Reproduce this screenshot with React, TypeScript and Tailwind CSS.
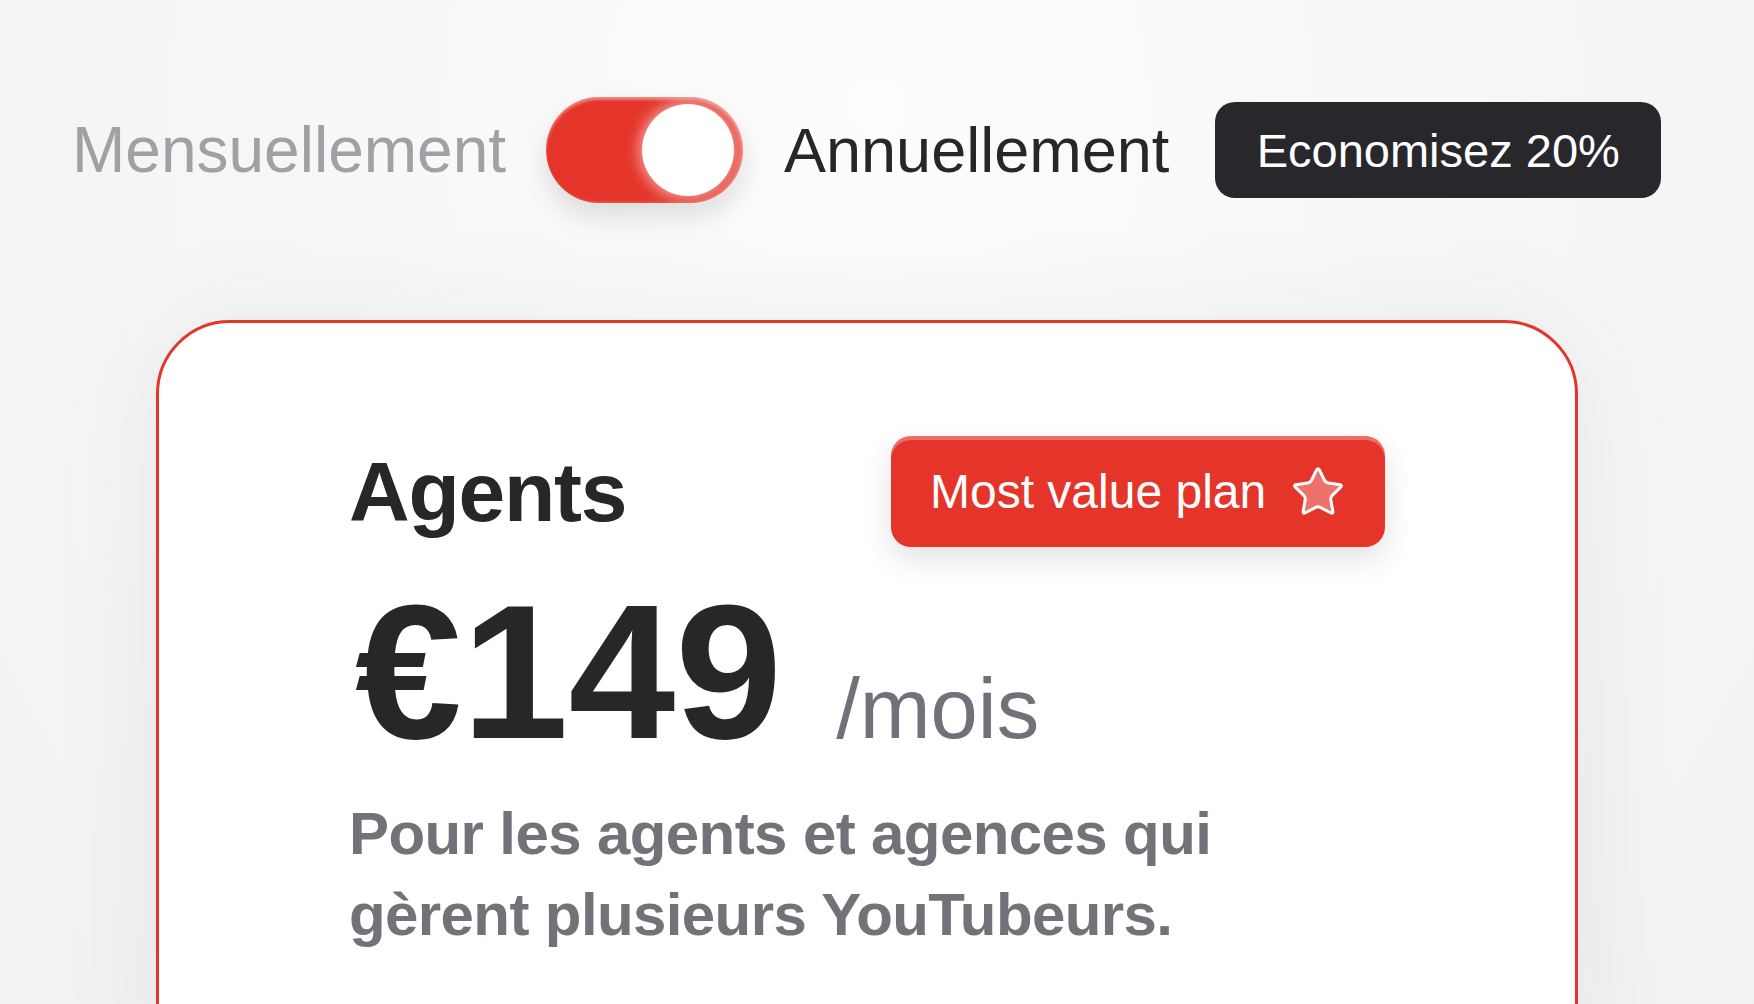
import React, { useState } from 'react';
import { Star } from 'lucide-react';

export default function App() {
  const [yearly, setYearly] = useState(true);

  return (
    <div
      className="min-h-screen w-full overflow-hidden bg-[#f6f6f6] bg-[radial-gradient(ellipse_at_50%_10%,#fdfdfd_0%,#f7f7f7_45%,#f1f1f1_100%)] text-[#27272a]"
      style={{ fontFamily: '"Liberation Sans", Arial, sans-serif' }}
    >
      <div className="w-[1734px] pt-[97px]">
        {/* Billing switch */}
        <div className="flex items-center pl-[72px]">
          <span className="text-[64px] leading-none text-[#a0a0a5]">Mensuellement</span>
          <button
            onClick={() => setYearly(!yearly)}
            className="ml-[40px] flex h-[106px] w-[197px] items-center justify-end rounded-full bg-[#e5352a] pr-[9px] shadow-[inset_0_3px_3px_rgba(255,255,255,0.35),inset_-3px_0_4px_rgba(255,255,255,0.3),0_14px_28px_rgba(0,0,0,0.12)]"
          >
            <span className="block h-[92px] w-[92px] rounded-full bg-white shadow-[0_0_14px_3px_rgba(255,255,255,0.55)]" />
          </button>
          <span className="ml-[41px] text-[63px] leading-none text-[#27272a]">Annuellement</span>
          <span className="ml-[46px] flex h-[96px] w-[446px] items-center justify-center rounded-[20px] bg-[#28282c] text-[47px] leading-none text-white">
            Economisez 20%
          </span>
        </div>

        {/* Plan card */}
        <div className="ml-[156px] mt-[117px] h-[760px] w-[1422px] rounded-[74px] border-[3px] border-[#e5352a] bg-white px-[190px] pt-[113px] shadow-[0_0_120px_rgba(0,0,0,0.06)]">
          <div className="flex items-center justify-between">
            <h2 className="text-[84px] font-bold leading-none tracking-[-0.015em] text-[#27272a]">Agents</h2>
            <div className="flex h-[111px] w-[494px] items-center justify-between rounded-[20px] bg-[#e5352a] pl-[39px] pr-[39px] shadow-[inset_0_4px_0_rgba(255,255,255,0.28),0_12px_30px_rgba(0,0,0,0.12)]">
              <span className="text-[48px] leading-none text-white">Most value plan</span>
              <Star size={56} strokeWidth={1.3} color="#ffffff" fill="#ee716c" />
            </div>
          </div>

          <div className="mt-[29px] flex items-baseline">
            <span className="ml-[6px] text-[192px] font-bold leading-none text-[#27272a]">€149</span>
            <span className="ml-[54px] text-[85px] leading-none text-[#71717a]">/mois</span>
          </div>

          <p className="mt-[25px] max-w-[900px] text-[60px] font-bold leading-[81px] tracking-[-0.01em] text-[#727279]">
            Pour les agents et agences qui gèrent plusieurs YouTubeurs.
          </p>
        </div>
      </div>
    </div>
  );
}
